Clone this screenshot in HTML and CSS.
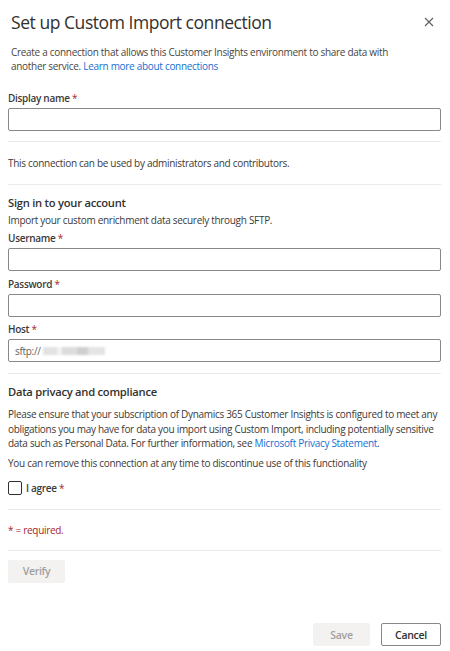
FILE: index.html
```html
<!DOCTYPE html>
<html lang="en">
<head>
<meta charset="utf-8">
<title>Set up Custom Import connection</title>
<link rel="stylesheet" href="styles.css">
</head>
<body>
<div class="panel">
  <div class="header">
    <h1 class="title">Set up Custom Import connection</h1>
    <button class="close" aria-label="Close">
      <svg width="10" height="10" viewBox="0 0 10 10"><path d="M1 1L9 9M9 1L1 9" stroke="#605e5c" stroke-width="1.1" fill="none"/></svg>
    </button>
  </div>
  <p class="desc">Create a connection that allows this Customer Insights environment to share data with<br>another service. <a class="link" href="#">Learn more about connections</a></p>

  <label class="label first">Display name <span class="req">*</span></label>
  <div class="input"></div>
  <hr class="divider d1">
  <p class="text note">This connection can be used by administrators and contributors.</p>
  <hr class="divider d2">

  <h2 class="section">Sign in to your account</h2>
  <p class="text sub">Import your custom enrichment data securely through SFTP.</p>
  <label class="label">Username <span class="req">*</span></label>
  <div class="input"></div>
  <label class="label password">Password <span class="req">*</span></label>
  <div class="input"></div>
  <label class="label host-label">Host <span class="req">*</span></label>
  <div class="input host"><span class="prefix">sftp://</span><span class="blur"></span></div>
  <hr class="divider d3">

  <h2 class="section">Data privacy and compliance</h2>
  <p class="text para">Please ensure that your subscription of Dynamics 365 Customer Insights is configured to meet any obligations you may have for data you import using Custom Import, including potentially sensitive data such as Personal Data. For further information, see <a class="link" href="#">Microsoft Privacy Statement</a>.</p>
  <p class="text remove">You can remove this connection at any time to discontinue use of this functionality</p>
  <div class="agree"><span class="checkbox"></span><span class="agree-label">I agree <span class="req">*</span></span></div>
  <hr class="divider d4">
  <p class="required">* = required.</p>
  <hr class="divider d5">
  <div class="verify-row"><button class="btn disabled verify">Verify</button></div>

  <div class="footer">
    <button class="btn disabled save">Save</button>
    <button class="btn cancel">Cancel</button>
  </div>
</div>
</body>
</html>
```
FILE: styles.css
```css
* { box-sizing: border-box; }
html, body { margin: 0; padding: 0; background: #ffffff; }
body {
  font-family: "Open Sans", "Noto Sans", sans-serif;
  color: #3b3a39;
  font-size: 10px;
  letter-spacing: -0.3px;
}
.panel {
  width: 450px;
  height: 651px;
  padding: 0 9px 0 8px;
  display: flex;
  flex-direction: column;
}
.header {
  height: 44px;
  display: flex;
  align-items: center;
  justify-content: space-between;
  padding-left: 3px;
}
.title {
  margin: 0;
  font-size: 17.5px;
  font-weight: 400;
  letter-spacing: -0.45px;
  color: #323130;
  line-height: 24px;
}
.close {
  border: 0;
  background: none;
  padding: 0;
  width: 12px;
  height: 12px;
  margin-right: 6px;
  display: flex;
  align-items: center;
  justify-content: center;
}
.desc {
  margin: 1px 0 0 0;
  padding-left: 3px;
  line-height: 14px;
  color: #484644;
}
.link { color: #1570d2; text-decoration: none; }
.label {
  display: block;
  font-weight: 600;
  line-height: 14px;
  margin-top: 4px;
  color: #3b3a39;
}
.label.first { margin-top: 18px; }
.label.password { margin-top: 6px; }
.label.host-label { margin-top: 5px; }
.req { color: #a4262c; font-weight: 400; }
.input {
  height: 23px;
  border: 1px solid #8a8886;
  border-radius: 2px;
  margin-top: 3px;
  display: flex;
  align-items: center;
  padding-left: 6px;
}
.prefix { color: #605e5c; }
.blur {
  display: inline-block;
  width: 62px;
  height: 8px;
  margin-left: 2px;
  background: linear-gradient(90deg, #e2e2e2 0 22%, #f2f2f2 22% 30%, #dcdcdc 30% 55%, #cfcfcf 55% 72%, #e4e4e4 72% 100%);
  filter: blur(0.8px);
}
.divider {
  border: 0;
  height: 1px;
  background: #edebe9;
  margin: 0;
}
.d1 { margin-top: 10px; }
.d2 { margin-top: 14px; }
.d3 { margin-top: 11px; }
.d4 { margin-top: 14px; }
.d5 { margin-top: 13px; }
.text { margin: 0; line-height: 14px; color: #3b3a39; }
.note { margin-top: 14px; }
.section {
  margin: 10px 0 0 0;
  font-size: 11.2px;
  font-weight: 600;
  line-height: 16px;
  letter-spacing: -0.25px;
  color: #323130;
}
.sub { margin-top: 2px; }
.para { margin-top: 7px; line-height: 14.5px; }
.remove { margin-top: 5px; }
.agree {
  display: flex;
  align-items: center;
  margin-top: 11px;
  height: 14px;
}
.checkbox {
  width: 14px;
  height: 14px;
  border: 1px solid #323130;
  border-radius: 2px;
  margin-right: 4px;
}
.agree-label { font-weight: 600; line-height: 14px; }
.required {
  margin: 13px 0 0 0;
  line-height: 14px;
  color: #a4262c;
}
.verify-row { margin-top: 9px; }
.btn {
  font-family: inherit;
  font-size: 10.5px;
  letter-spacing: -0.3px;
  height: 23px;
  border-radius: 2px;
  padding: 0;
  font-weight: 600;
}
.btn.disabled {
  background: #f3f2f1;
  border: 1px solid #f3f2f1;
  color: #a19f9d;
}
.verify { width: 57px; }
.footer {
  margin-top: auto;
  margin-bottom: 5px;
  display: flex;
  justify-content: flex-end;
  gap: 11px;
}
.save { width: 57px; }
.cancel {
  width: 60px;
  background: #ffffff;
  border: 1px solid #8a8886;
  color: #323130;
}
```
